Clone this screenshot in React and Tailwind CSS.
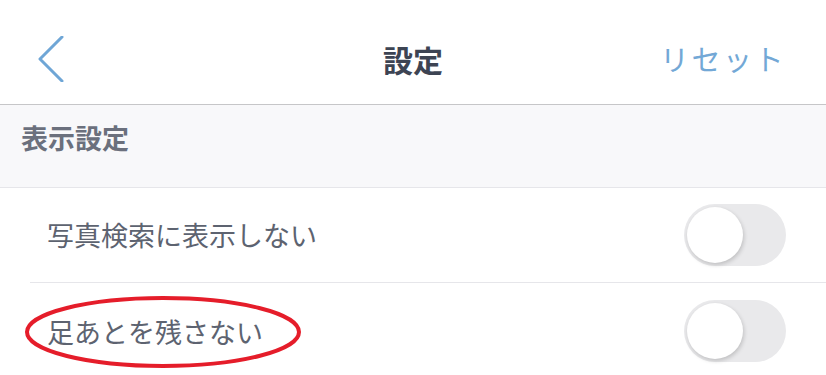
const Toggle = () => (
  <div className="relative w-[102px] h-[62px] rounded-full bg-[#e9e9eb]">
    <div className="absolute left-[3px] top-[3px] w-[56px] h-[56px] rounded-full bg-white shadow-[1px_2px_4px_rgba(0,0,0,0.18)]" />
  </div>
);

export default function App() {
  return (
    <div className="w-[826px] h-[375px] overflow-hidden bg-white font-['Noto_Sans_CJK_JP',sans-serif]">
      <header className="h-[105px] pt-[14px] flex items-center justify-between border-b border-[#c6c6c8] pl-[38px] pr-[40px] relative">
        <svg width="26" height="46" viewBox="0 0 26 46">
          <polyline points="24,1 2,23 24,45" fill="none" stroke="#6fa6d6" strokeWidth="3" strokeLinecap="round" strokeLinejoin="round" />
        </svg>
        <h1 className="absolute left-0 right-0 top-[14px] bottom-0 flex items-center justify-center text-[30px] font-bold text-[#3d4453] pointer-events-none">設定</h1>
        <span className="text-[29px] text-[#73a8d6] tracking-[2.5px]">リセット</span>
      </header>
      <div className="h-[83px] pb-[15px] bg-[#f8f8fa] border-b border-[#e6e6ea] flex items-center pl-[21px]">
        <span className="text-[27px] font-bold text-[#6b707d]">表示設定</span>
      </div>
      <div className="pl-[30px]">
        <div className="h-[95px] flex items-center justify-between border-b border-[#e6e6ea] pr-[40px]">
          <span className="pl-[17px] text-[27px] text-[#5d6370]">写真検索に表示しない</span>
          <Toggle />
        </div>
        <div className="h-[95px] flex items-center justify-between pr-[40px] relative">
          <span className="pl-[17px] pt-[4px] text-[27px] text-[#5d6370]">足あとを残さない</span>
          <Toggle />
          <svg className="absolute left-[-6px] top-[12px]" width="280" height="76" viewBox="0 0 280 76">
            <ellipse cx="139" cy="37" rx="136" ry="34" fill="none" stroke="#e51d2a" strokeWidth="4" />
          </svg>
        </div>
      </div>
    </div>
  );
}
